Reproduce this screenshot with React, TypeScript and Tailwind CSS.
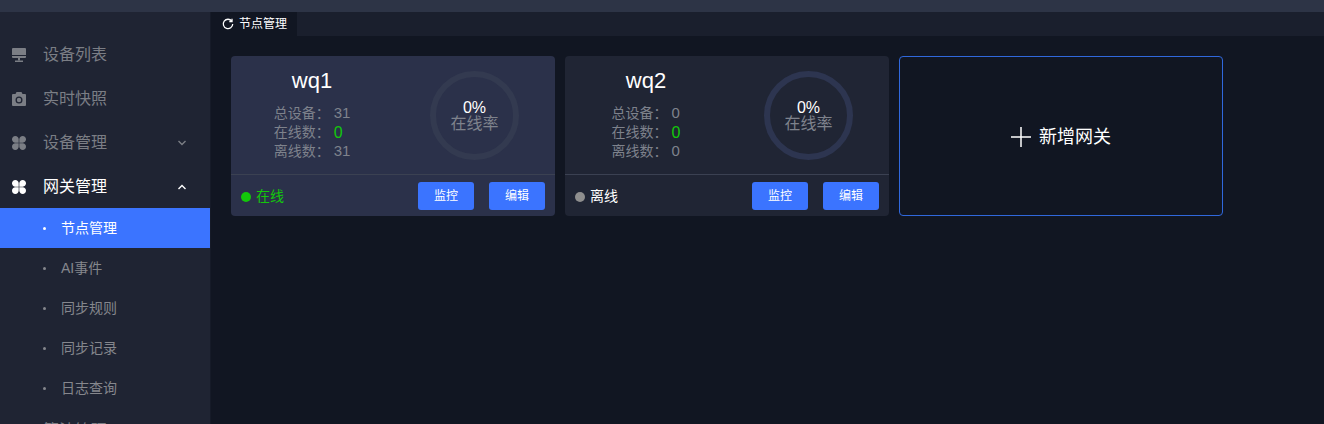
import { ReactNode } from 'react';

const font = { fontFamily: '"Liberation Sans", "Noto Sans CJK SC", sans-serif' };

const Monitor = () => (
  <svg width="14" height="14" viewBox="0 0 14 14" fill="currentColor" className="block">
    <path d="M1 0h12a1 1 0 0 1 1 1v6H0V1a1 1 0 0 1 1-1z" />
    <path d="M0 8h14v1a1 1 0 0 1-1 1H1a1 1 0 0 1-1-1z" />
    <rect x="6" y="10" width="2" height="2.500" />
    <rect x="3" y="12.500" width="8" height="1.500" />
  </svg>
);

const Camera = () => (
  <svg width="14" height="14" viewBox="0 0 14 14" fill="currentColor" className="block">
    <path fillRule="evenodd" d="M1 2h2.500l1-2h5l1 2H13a1 1 0 0 1 1 1v10a1 1 0 0 1-1 1H1a1 1 0 0 1-1-1V3a1 1 0 0 1 1-1zm6 2.500a3.500 3.500 0 1 0 0 7 3.500 3.500 0 0 0 0-7zm0 1.300a2.200 2.200 0 1 1 0 4.400 2.200 2.200 0 0 1 0-4.400z" />
    <rect x="11" y="3.500" width="1.500" height="1.500" />
  </svg>
);

const Clover = () => (
  <svg width="14" height="14" viewBox="0 0 14 14" fill="currentColor" className="block">
    <path d="M3.300 0C5.200 0 6.700 1.500 6.700 3.400v3.300H3.300C1.500 6.700 0 5.200 0 3.300S1.500 0 3.300 0z" />
    <path d="M10.700 0C12.500 0 14 1.500 14 3.300s-1.500 3.400-3.300 3.400H7.300V3.400C7.300 1.500 8.800 0 10.700 0z" />
    <path d="M3.300 7.300h3.400v3.300C6.700 12.500 5.200 14 3.300 14S0 12.500 0 10.700s1.500-3.400 3.300-3.400z" />
    <path d="M7.300 7.300h3.400c1.800 0 3.300 1.500 3.300 3.400S12.500 14 10.700 14s-3.400-1.500-3.400-3.400z" />
  </svg>
);

const Chevron = ({ up }: { up?: boolean }) => (
  <svg width="10" height="6" viewBox="0 0 10 6" fill="none" stroke="currentColor" strokeWidth="1.400">
    <path d={up ? 'M1.500 5 5 1.500 8.500 5' : 'M1.500 1 5 4.500 8.500 1'} />
  </svg>
);

const NavItem = ({ icon, label, active, chevron }: { icon: ReactNode; label: string; active?: boolean; chevron?: 'up' | 'down' }) => (
  <div className={`flex h-11 items-center pl-3 pr-[23px] pt-[2px] text-[16px] ${active ? 'text-white' : 'text-[#7b7e85]'}`}>
    <span className="w-[31px] shrink-0">{icon}</span>
    <span className="flex-1">{label}</span>
    {chevron && <Chevron up={chevron === 'up'} />}
  </div>
);

const SubItem = ({ label, active }: { label: string; active?: boolean }) => (
  <div className={`flex h-10 items-center pl-[43px] text-[14px] ${active ? 'bg-[#3b74ff] text-white' : 'text-[#85878d]'}`}>
    <span className={`h-[3px] w-[3px] rounded-full ${active ? 'bg-white' : 'bg-[#85878d]'}`} />
    <span className="ml-[15px]">{label}</span>
  </div>
);

const Stat = ({ label, value, green }: { label: string; value: string; green?: boolean }) => (
  <div className="flex h-[19px] items-center">
    <span className="text-[#7e828c]">{label}：</span>
    <span className={`ml-1 ${green ? 'text-[16px] text-[#13c80a]' : 'text-[15px] text-[#7e828c]'}`}>{value}</span>
  </div>
);

const GatewayCard = ({ name, total, off, online, bg, ring }: { name: string; total: string; off: string; online?: boolean; bg: string; ring: string }) => (
  <div className={`flex h-40 w-81 flex-col rounded ${bg}`}>
    <div className="flex h-[119px] border-b border-[#3b4152]">
      <div className="w-[162px]">
        <div className="mt-[11px] text-center text-[22px] leading-7 text-white">{name}</div>
        <div className="mt-[9px] flex flex-col items-center text-[14px]">
          <div>
            <Stat label="总设备" value={total} />
            <Stat label="在线数" value="0" green />
            <Stat label="离线数" value={off} />
          </div>
        </div>
      </div>
      <div className="flex flex-1 items-start pl-[37px] pt-[15px]">
        <div className={`flex h-[89px] w-[89px] flex-col items-center justify-center rounded-full border-[6px] ${ring}`}>
          <span className="translate-y-px text-[16px] leading-[16px] text-white">0%</span>
          <span className="text-[16px] leading-[17px] text-[#7e828c]">在线率</span>
        </div>
      </div>
    </div>
    <div className="flex flex-1 items-center px-[10px] pt-px">
      <span className={`mt-px h-[10px] w-[10px] rounded-full ${online ? 'bg-[#13c80a]' : 'bg-[#8e8e8e]'}`} />
      <span className={`ml-[5px] mt-px flex-1 text-[14px] ${online ? 'text-[#13c80a]' : 'text-white'}`}>{online ? '在线' : '离线'}</span>
      <button className="h-7 w-14 rounded-[3px] bg-[#3b74ff] text-[12px] text-white">监控</button>
      <button className="ml-[15px] h-7 w-14 rounded-[3px] bg-[#3b74ff] text-[12px] text-white">编辑</button>
    </div>
  </div>
);

export default function App() {
  return (
    <div style={font} className="flex h-[424px] w-[1324px] flex-col overflow-hidden bg-[#111622]">
      <div className="h-3 shrink-0 bg-[#2d3446]" />
      <div className="flex min-h-0 flex-1">
        <aside className="w-[211px] shrink-0 overflow-hidden border-r border-[#161b28] bg-[#1f2433] pt-5">
          <NavItem icon={<Monitor />} label="设备列表" />
          <NavItem icon={<Camera />} label="实时快照" />
          <NavItem icon={<Clover />} label="设备管理" chevron="down" />
          <NavItem icon={<Clover />} label="网关管理" active chevron="up" />
          <SubItem label="节点管理" active />
          <SubItem label="AI事件" />
          <SubItem label="同步规则" />
          <SubItem label="同步记录" />
          <SubItem label="日志查询" />
          <NavItem icon={<Clover />} label="算法管理" />
        </aside>
        <main className="min-w-0 flex-1">
          <div className="flex h-6 bg-[#1a1f2d]">
            <div className="flex w-[86px] items-center bg-[#111622] pl-[11px] text-[12px] text-white">
              <svg width="12" height="12" viewBox="0 0 12 12" fill="none" stroke="currentColor" strokeWidth="1.300">
                <path d="M9.800 3.200A4.700 4.700 0 1 0 10.700 6" />
                <path d="M10 .8v2.700H7.300" />
              </svg>
              <span className="ml-[5px]">节点管理</span>
            </div>
          </div>
          <div className="flex gap-[10px] pl-5 pt-5">
            <GatewayCard name="wq1" total="31" off="31" online bg="bg-[#2b314a]" ring="border-[#333a50]" />
            <GatewayCard name="wq2" total="0" off="0" bg="bg-[#202534]" ring="border-[#2d3550]" />
            <div className="flex h-40 w-81 items-center justify-center rounded border border-[#3068dc] pt-[2px] text-[18px] text-white">
              <svg width="20" height="20" viewBox="0 0 20 20" stroke="currentColor" strokeWidth="1.500">
                <path d="M10 0v20M0 10h20" />
              </svg>
              <span className="ml-2">新增网关</span>
            </div>
          </div>
        </main>
      </div>
    </div>
  );
}
